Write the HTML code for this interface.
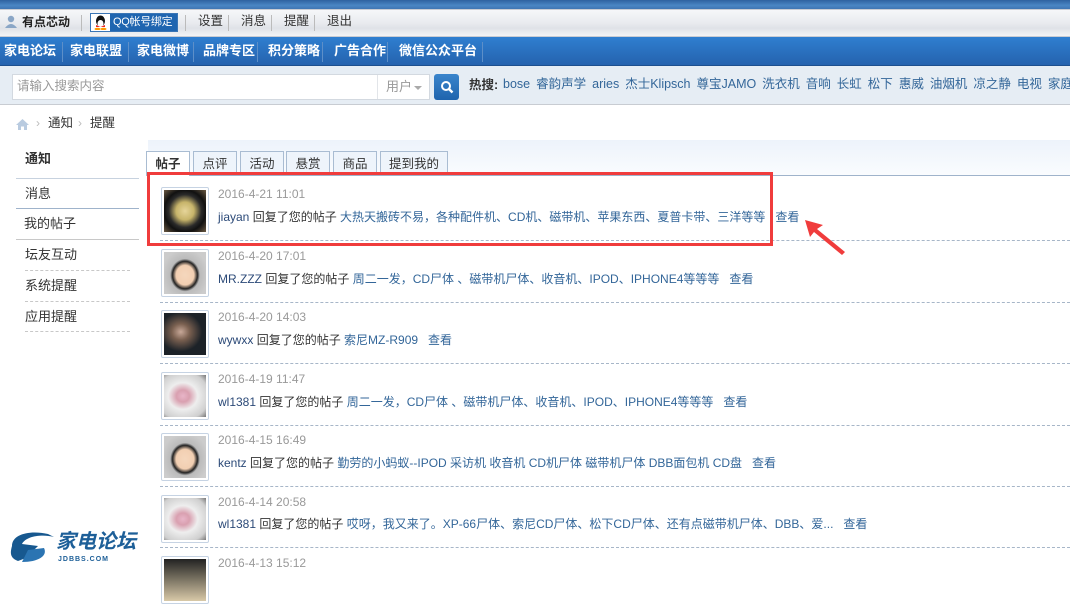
<!DOCTYPE html>
<html><head><meta charset="utf-8"><style>
*{margin:0;padding:0;box-sizing:border-box}
body{width:1070px;height:571px;overflow:hidden;background:#fff;font-family:"Liberation Sans","Noto Sans CJK SC",sans-serif;font-size:12px;color:#333;position:relative}
.a{position:absolute;white-space:nowrap;line-height:1.2}
#top{left:0;top:0;width:1070px;height:9px;background:linear-gradient(#2e62a0,#4a86c4 60%,#3f76b3)}
#bar{left:0;top:9px;width:1070px;height:28px;background:linear-gradient(#f6f7f9,#e9ebef 50%,#dfe2e7 70%,#f3f4f6);border-top:1px solid #c9ccd3;border-bottom:1px solid #c9ccd3}
#nav{left:0;top:37px;width:1070px;height:29px;background:linear-gradient(#2f7fd0,#2563ae);border-bottom:1px solid #1d4f8e}
#nav span{position:absolute;top:6px;color:#fff;font-weight:bold;font-size:13px;line-height:1.2}
.sep{position:absolute;top:5px;width:1px;height:20px;background:#5d8fc8}
#srch{left:0;top:66px;width:1070px;height:39px;background:#e6edf4;border-bottom:1px solid #c8ccd2}
.hot{color:#336699;font-size:12.5px;word-spacing:0}
.hot i{font-style:normal;margin-right:6px}
.side{color:#333;font-size:13px}
.row .d{color:#999;font-size:12px}
.row .t{font-size:12px;color:#336699}
.av{position:absolute;width:48px;height:48px;border:1px solid #c6d3e3;border-radius:2px;padding:2px;background:#fff}
.av i{display:block;width:100%;height:100%}
.dash{position:absolute;left:160px;width:910px;border-top:1px dashed #a7b6c8}
.tab{position:absolute;top:151px;height:24px;border:1px solid #a9bcd2;border-bottom:none;background:#eef4fb;font-size:12.5px;text-align:center;line-height:24px;color:#333}
</style></head><body>
<div class="a" id="top"></div>
<div class="a" id="bar">
 <svg class="a" style="left:5px;top:5px" width="12" height="13"><circle cx="6" cy="4" r="3.2" fill="#8aa6c6"/><path d="M0 13 Q6 5 12 13Z" fill="#8aa6c6"/></svg>
 <span class="a" style="left:22px;top:5px;font-weight:bold;font-size:12px;color:#222">有点芯动</span>
 <div class="a" style="left:81px;top:5px;width:1px;height:16px;background:#bbb"></div>
 <div class="a" style="left:90px;top:3px;width:88px;height:19px;border:1px solid #3a75b5;background:#1f65b0">
  <div class="a" style="left:0;top:0;width:19px;height:17px;background:#fff"></div>
  <svg class="a" style="left:3px;top:1px" width="13" height="15"><ellipse cx="6.5" cy="6" rx="4.5" ry="5.5" fill="#111"/><ellipse cx="6.5" cy="8.5" rx="3" ry="3.5" fill="#fff"/><path d="M2 10 L6.5 12 11 10 11 12 2 12Z" fill="#e22"/><ellipse cx="3.5" cy="14" rx="3" ry="1.2" fill="#f90"/><ellipse cx="9.5" cy="14" rx="3" ry="1.2" fill="#f90"/></svg>
  <span class="a" style="left:22px;top:2px;color:#fff;font-size:11px;letter-spacing:-0.3px">QQ帐号绑定</span>
 </div>
 <div class="a" style="left:185px;top:5px;width:1px;height:16px;background:#bbb"></div>
 <span class="a" style="left:198px;top:4px;font-size:12.5px">设置</span>
 <div class="a" style="left:228px;top:5px;width:1px;height:16px;background:#bbb"></div>
 <span class="a" style="left:241px;top:4px;font-size:12.5px">消息</span>
 <div class="a" style="left:271px;top:5px;width:1px;height:16px;background:#bbb"></div>
 <span class="a" style="left:284px;top:4px;font-size:12.5px">提醒</span>
 <div class="a" style="left:314px;top:5px;width:1px;height:16px;background:#bbb"></div>
 <span class="a" style="left:327px;top:4px;font-size:12.5px">退出</span>
</div>
<div class="a" id="nav">
 <span style="left:4px">家电论坛</span><i class="sep" style="left:62px"></i>
 <span style="left:70px">家电联盟</span><i class="sep" style="left:128px"></i>
 <span style="left:137px">家电微博</span><i class="sep" style="left:193px"></i>
 <span style="left:203px">品牌专区</span><i class="sep" style="left:257px"></i>
 <span style="left:268px">积分策略</span><i class="sep" style="left:322px"></i>
 <span style="left:334px">广告合作</span><i class="sep" style="left:387px"></i>
 <span style="left:399px">微信公众平台</span><i class="sep" style="left:482px"></i>
</div>
<div class="a" id="srch">
 <div class="a" style="left:12px;top:8px;width:418px;height:26px;background:#fff;border:1px solid #d3d9e0"></div>
 <span class="a" style="left:17px;top:13px;color:#999;font-size:12.5px">请输入搜索内容</span>
 <div class="a" style="left:377px;top:9px;width:1px;height:24px;background:#e2e5e9"></div>
 <span class="a" style="left:386px;top:13px;color:#999;font-size:13px">用户</span>
 <svg class="a" style="left:414px;top:20px" width="8" height="5"><path d="M0 0H8L4 4Z" fill="#aaa"/></svg>
 <div class="a" style="left:434px;top:8px;width:25px;height:26px;background:linear-gradient(#3a85cc,#1f64ad);border-radius:3px"></div>
 <svg class="a" style="left:440px;top:14px" width="14" height="14"><circle cx="6" cy="6" r="4" stroke="#fff" stroke-width="2" fill="none"/><path d="M9 9L12.5 12.5" stroke="#fff" stroke-width="2.4"/></svg>
 <span class="a" style="left:469px;top:12px;font-weight:bold;font-size:12.5px;color:#333">热搜:</span>
 <span class="a hot" style="left:503px;top:11px"><i>bose</i><i>睿韵声学</i><i>aries</i><i>杰士Klipsch</i><i>尊宝JAMO</i><i>洗衣机</i><i>音响</i><i>长虹</i><i>松下</i><i>惠威</i><i>油烟机</i><i>凉之静</i><i>电视</i><i>家庭</i></span>
</div>
<svg class="a" style="left:16px;top:118px" width="13" height="12"><path d="M6.5 1L0 7H2V12H5V8.5H8V12H11V7H13Z" fill="#b9cbe0"/></svg>
<span class="a" style="left:36px;top:116px;color:#bbb">›</span>
<span class="a" style="left:48px;top:116px;font-size:12.5px">通知</span>
<span class="a" style="left:78px;top:116px;color:#bbb">›</span>
<span class="a" style="left:90px;top:116px;font-size:12.5px">提醒</span>
<div class="a" style="left:148px;top:140px;width:922px;height:36px;background:linear-gradient(#edf3fb,#fafcfe)"></div>
<div class="a" style="left:148px;top:175px;width:922px;height:1px;background:#9fb3cb"></div>
<div class="tab" style="left:146px;width:44px;background:#fff;height:25px;font-weight:bold">帖子</div>
<div class="tab" style="left:193px;width:44px">点评</div>
<div class="tab" style="left:240px;width:44px">活动</div>
<div class="tab" style="left:286px;width:44px">悬赏</div>
<div class="tab" style="left:333px;width:44px">商品</div>
<div class="tab" style="left:380px;width:68px">提到我的</div>
<span class="a" style="left:25px;top:151px;font-weight:bold;font-size:13px">通知</span>
<div class="a" style="left:16px;top:178px;width:123px;height:1px;background:#c7d2df"></div>
<span class="a side" style="left:25px;top:186px">消息</span>
<div class="a" style="left:16px;top:208px;width:123px;height:1px;background:#9fb3cb"></div>
<span class="a side" style="left:24px;top:216px">我的帖子</span>
<div class="a" style="left:16px;top:239px;width:123px;height:1px;background:#c8c8c8"></div>
<span class="a side" style="left:25px;top:247px">坛友互动</span>
<div class="a" style="left:25px;top:270px;width:105px;border-top:1px dashed #c8c8c8"></div>
<span class="a side" style="left:25px;top:278px">系统提醒</span>
<div class="a" style="left:25px;top:301px;width:105px;border-top:1px dashed #c8c8c8"></div>
<span class="a side" style="left:25px;top:309px">应用提醒</span>
<div class="a" style="left:25px;top:331px;width:105px;border-top:1px dashed #c8c8c8"></div>

<div class="row">
<div class="av" style="left:161px;top:187px"><i style="background:radial-gradient(circle,#e6d59a 0,#c7b46a 30%,#2a2a2a 55%,#111 70%,#6b5a44 100%)"></i></div>
<span class="a d" style="left:218px;top:187px">2016-4-21 11:01</span>
<span class="a t" style="left:218px;top:210px"><b style="font-weight:normal;color:#2c4a78">jiayan</b> <span style="color:#333">回复了您的帖子</span> 大热天搬砖不易，各种配件机、CD机、磁带机、苹果东西、夏普卡带、三洋等等&nbsp;&nbsp;&nbsp;查看</span>
<div class="dash" style="top:240px"></div>

<div class="av" style="left:161px;top:249px"><i style="background:radial-gradient(ellipse at 50% 55%,#f5d7bd 0,#f2cfb2 30%,#222 42%,#bbb 50%,#ccc 80%)"></i></div>
<span class="a d" style="left:218px;top:249px">2016-4-20 17:01</span>
<span class="a t" style="left:218px;top:272px"><b style="font-weight:normal;color:#2c4a78">MR.ZZZ</b> <span style="color:#333">回复了您的帖子</span> 周二一发，CD尸体 、磁带机尸体、收音机、IPOD、IPHONE4等等等&nbsp;&nbsp;&nbsp;查看</span>
<div class="dash" style="top:302px"></div>

<div class="av" style="left:161px;top:310px"><i style="background:radial-gradient(ellipse at 40% 45%,#c8a898 0,#7a6050 25%,#1c2228 60%)"></i></div>
<span class="a d" style="left:218px;top:310px">2016-4-20 14:03</span>
<span class="a t" style="left:218px;top:333px"><b style="font-weight:normal;color:#2c4a78">wywxx</b> <span style="color:#333">回复了您的帖子</span> 索尼MZ-R909&nbsp;&nbsp;&nbsp;查看</span>
<div class="dash" style="top:363px"></div>

<div class="av" style="left:161px;top:372px"><i style="background:radial-gradient(ellipse at 45% 50%,#e8b5c8 0,#d9a0b0 20%,#eee 45%,#cfcfcf 80%,#777 100%)"></i></div>
<span class="a d" style="left:218px;top:372px">2016-4-19 11:47</span>
<span class="a t" style="left:218px;top:395px"><b style="font-weight:normal;color:#2c4a78">wl1381</b> <span style="color:#333">回复了您的帖子</span> 周二一发，CD尸体 、磁带机尸体、收音机、IPOD、IPHONE4等等等&nbsp;&nbsp;&nbsp;查看</span>
<div class="dash" style="top:425px"></div>

<div class="av" style="left:161px;top:433px"><i style="background:radial-gradient(ellipse at 50% 55%,#f5d7bd 0,#f2cfb2 30%,#222 42%,#bbb 50%,#ccc 80%)"></i></div>
<span class="a d" style="left:218px;top:433px">2016-4-15 16:49</span>
<span class="a t" style="left:218px;top:456px"><b style="font-weight:normal;color:#2c4a78">kentz</b> <span style="color:#333">回复了您的帖子</span> 勤劳的小蚂蚁--IPOD 采访机 收音机 CD机尸体 磁带机尸体 DBB面包机 CD盘&nbsp;&nbsp;&nbsp;查看</span>
<div class="dash" style="top:486px"></div>

<div class="av" style="left:161px;top:495px"><i style="background:radial-gradient(ellipse at 45% 50%,#e8b5c8 0,#d9a0b0 20%,#eee 45%,#cfcfcf 80%,#777 100%)"></i></div>
<span class="a d" style="left:218px;top:495px">2016-4-14 20:58</span>
<span class="a t" style="left:218px;top:517px"><b style="font-weight:normal;color:#2c4a78">wl1381</b> <span style="color:#333">回复了您的帖子</span> 哎呀，我又来了。XP-66尸体、索尼CD尸体、松下CD尸体、还有点磁带机尸体、DBB、爱...&nbsp;&nbsp;&nbsp;查看</span>
<div class="dash" style="top:547px"></div>

<div class="av" style="left:161px;top:556px"><i style="background:linear-gradient(#222,#d8c9a8)"></i></div>
<span class="a d" style="left:218px;top:556px">2016-4-13 15:12</span>
</div>

<div class="a" style="left:147px;top:172px;width:626px;height:74px;border:3px solid #f03c3c"></div>
<svg class="a" style="left:803px;top:218px" width="44" height="38"><path d="M2 2 L20 7 L14 11 L42 34 L39 37 L11 14 L7 19Z" fill="#f03c3c"/></svg>

<svg class="a" style="left:8px;top:528px" width="50" height="36"><path d="M4 18 C4 6 22 2 40 6 L46 9 C34 6 18 8 14 16 L30 18 L18 30 L10 33 C2 30 2 25 4 18Z" fill="#17588f"/><path d="M20 22 L36 20 C40 28 30 34 14 34Z" fill="#2b74b2"/></svg>
<span class="a" style="left:56px;top:530px;font-size:20px;font-weight:bold;font-style:italic;color:#1d5f98">家电论坛</span>
<span class="a" style="left:58px;top:556px;font-size:7px;font-weight:bold;color:#1d5f98;letter-spacing:1px">JDBBS.COM</span>
</body></html>
